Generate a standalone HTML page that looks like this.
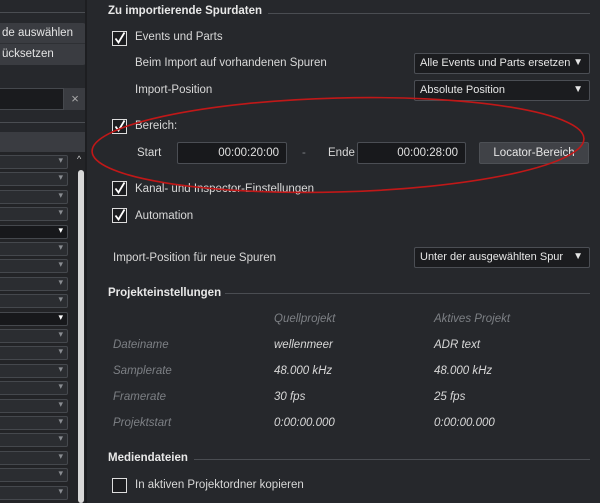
<!DOCTYPE html><html><head><style>
*{margin:0;padding:0;box-sizing:border-box}
body{width:600px;height:503px;background:#26282c;font-family:"Liberation Sans",sans-serif;font-size:11.5px;color:#d8d8d8;position:relative;overflow:hidden}
.a{position:absolute;white-space:nowrap}
.h{font-weight:bold;color:#e8e8e8}
.ln{position:absolute;height:1px;background:#4a4d52}
.cb{position:absolute;width:15px;height:15px;border:1.5px solid #ddd;background:#1c1d20}
.cb svg{position:absolute;left:1px;top:0}
.dd{position:absolute;height:21px;border:1px solid #4b4e54;background:#1b1c1f;border-radius:2px;padding:3px 5px;color:#e6e6e6;font-size:11px}
.dd b{position:absolute;right:6px;top:3px;font-size:10px}
.f{position:absolute;height:22px;border:1px solid #4b4e54;background:#18191c;border-radius:2px;text-align:right;padding:4px 7px;color:#e0e0e0}
.it{font-style:italic;position:absolute}
.g{color:#7d8085}
.ld{position:absolute;left:-4px;width:72px;height:14px;border:1px solid #45484d;background:#2b2d31;border-radius:2px}
.ld::after{content:"▾";position:absolute;right:4px;top:-1px;font-size:9px;color:#8a8d92}
.ld.k{background:#17181b}.ld.k::after{color:#fff}
</style></head><body>
<div class="ln" style="left:0;top:12px;width:86px"></div>
<div class="a" style="left:-4px;top:23px;width:90px;height:42px;background:#3a3c41;border-radius:3px"></div>
<div class="ln" style="left:0;top:43px;width:86px;background:#2e3034"></div>
<div class="a" style="left:2px;top:27px;color:#e4e4e4">de auswählen</div>
<div class="a" style="left:2px;top:48px;color:#e4e4e4">ücksetzen</div>
<div class="a" style="left:-4px;top:88px;width:68px;height:22px;background:#1a1b1e;border:1px solid #45484d"></div>
<div class="a" style="left:64px;top:88px;width:22px;height:22px;background:#3a3c41;color:#aaa;text-align:center;line-height:21px;font-size:13px">×</div>
<div class="ln" style="left:0;top:122px;width:86px"></div>
<div class="a" style="left:0;top:132px;width:86px;height:20px;background:#3a3c41"></div>
<div class="a" style="left:0;top:152px;width:86px;height:351px;background:#232427"></div>
<div class="a" style="left:78px;top:170px;width:6px;height:333px;background:#d8d8d8;border-radius:3px"></div>
<div class="a" style="left:77px;top:154px;font-size:9px;color:#ccc">^</div>
<div class="a" style="left:85px;top:0;width:2px;height:503px;background:#1d1e21"></div>
<div class="ld" style="top:155px"></div><div class="ld" style="top:172px"></div><div class="ld" style="top:190px"></div><div class="ld" style="top:207px"></div><div class="ld k" style="top:225px"></div><div class="ld" style="top:242px"></div><div class="ld" style="top:259px"></div><div class="ld" style="top:277px"></div><div class="ld" style="top:294px"></div><div class="ld k" style="top:312px"></div><div class="ld" style="top:329px"></div><div class="ld" style="top:346px"></div><div class="ld" style="top:364px"></div><div class="ld" style="top:381px"></div><div class="ld" style="top:399px"></div><div class="ld" style="top:416px"></div><div class="ld" style="top:433px"></div><div class="ld" style="top:451px"></div><div class="ld" style="top:468px"></div><div class="ld" style="top:486px"></div>

<div class="a h" style="left:108px;top:5px">Zu importierende Spurdaten</div>
<div class="ln" style="left:268px;top:13px;width:322px"></div>
<div class="cb" style="left:112px;top:31px"><svg width="12" height="12" viewBox="0 0 12 12"><path d="M1.5 6.5 L4.5 10.5 L10.5 0.5" fill="none" stroke="#fff" stroke-width="1.8"/></svg></div>
<div class="a" style="left:135px;top:31px">Events und Parts</div>
<div class="a" style="left:135px;top:57px">Beim Import auf vorhandenen Spuren</div>
<div class="dd" style="left:414px;top:53px;width:176px">Alle Events und Parts ersetzen<b>▼</b></div>
<div class="a" style="left:135px;top:84px">Import-Position</div>
<div class="dd" style="left:414px;top:80px;width:176px">Absolute Position<b>▼</b></div>
<div class="cb" style="left:112px;top:119px"><svg width="12" height="12" viewBox="0 0 12 12"><path d="M1.5 6.5 L4.5 10.5 L10.5 0.5" fill="none" stroke="#fff" stroke-width="1.8"/></svg></div>
<div class="a" style="left:135px;top:120px">Bereich:</div>
<div class="a" style="left:137px;top:147px">Start</div>
<div class="f" style="left:177px;top:142px;width:110px">00:00:20:00</div>
<div class="a g" style="left:302px;top:147px">-</div>
<div class="a" style="left:328px;top:147px">Ende</div>
<div class="f" style="left:357px;top:142px;width:109px">00:00:28:00</div>
<div class="a" style="left:479px;top:142px;width:110px;height:22px;background:#404247;border:1px solid #4d5055;border-radius:2px;text-align:center;line-height:20px;color:#e6e6e6">Locator-Bereich</div>
<div class="cb" style="left:112px;top:181px"><svg width="12" height="12" viewBox="0 0 12 12"><path d="M1.5 6.5 L4.5 10.5 L10.5 0.5" fill="none" stroke="#fff" stroke-width="1.8"/></svg></div>
<div class="a" style="left:135px;top:183px">Kanal- und Inspector-Einstellungen</div>
<div class="cb" style="left:112px;top:208px"><svg width="12" height="12" viewBox="0 0 12 12"><path d="M1.5 6.5 L4.5 10.5 L10.5 0.5" fill="none" stroke="#fff" stroke-width="1.8"/></svg></div>
<div class="a" style="left:135px;top:210px">Automation</div>
<div class="a" style="left:113px;top:252px">Import-Position für neue Spuren</div>
<div class="dd" style="left:414px;top:247px;width:176px">Unter der ausgewählten Spur<b>▼</b></div>
<div class="a h" style="left:108px;top:287px">Projekteinstellungen</div>
<div class="ln" style="left:225px;top:293px;width:365px"></div>
<div class="it g" style="left:274px;top:313px">Quellprojekt</div>
<div class="it g" style="left:434px;top:313px">Aktives Projekt</div>
<div class="it g" style="left:113px;top:339px">Dateiname</div>
<div class="it" style="left:274px;top:339px">wellenmeer</div>
<div class="it" style="left:434px;top:339px">ADR text</div>
<div class="it g" style="left:113px;top:365px">Samplerate</div>
<div class="it" style="left:274px;top:365px">48.000 kHz</div>
<div class="it" style="left:434px;top:365px">48.000 kHz</div>
<div class="it g" style="left:113px;top:391px">Framerate</div>
<div class="it" style="left:274px;top:391px">30 fps</div>
<div class="it" style="left:434px;top:391px">25 fps</div>
<div class="it g" style="left:113px;top:417px">Projektstart</div>
<div class="it" style="left:274px;top:417px">0:00:00.000</div>
<div class="it" style="left:434px;top:417px">0:00:00.000</div>
<div class="a h" style="left:108px;top:452px">Mediendateien</div>
<div class="ln" style="left:194px;top:459px;width:396px"></div>
<div class="cb" style="left:112px;top:478px"></div>
<div class="a" style="left:135px;top:479px">In aktiven Projektordner kopieren</div>

<svg class="a" style="left:0;top:0" width="600" height="503"><ellipse cx="338" cy="145" rx="246" ry="47" fill="none" stroke="#c01818" stroke-width="1.6" transform="rotate(-1.5 338 145)"/></svg>
</body></html>
